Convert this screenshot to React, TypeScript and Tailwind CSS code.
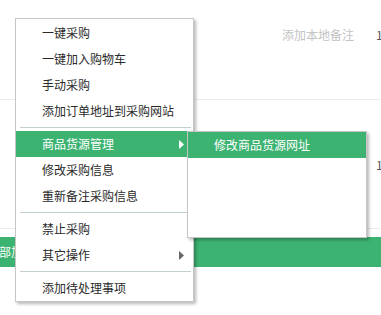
const MAIN_GROUPS = [
  ["一键采购", "一键加入购物车", "手动采购", "添加订单地址到采购网站"],
  ["商品货源管理", "修改采购信息", "重新备注采购信息"],
  ["禁止采购", "其它操作"],
  ["添加待处理事项"],
];

const HAS_SUB = ["商品货源管理", "其它操作"];

function Arrow({ light }: { light?: boolean }) {
  return (
    <svg width="5" height="9" viewBox="0 0 5 9" className="shrink-0">
      <path d="M0 0L5 4.5L0 9Z" fill={light ? "#ffffff" : "#666666"} />
    </svg>
  );
}

function MenuItem({ label, active }: { label: string; active?: boolean }) {
  return (
    <div
      className={`flex h-[26px] items-center pl-[26px] pr-[9px] ${
        active ? "bg-[#3cb371] text-white" : "text-[#2a2a2a]"
      }`}
    >
      <span className="flex-1 whitespace-nowrap leading-[16px]">{label}</span>
      {HAS_SUB.includes(label) && <Arrow light={active} />}
    </div>
  );
}

export default function App() {
  return (
    <div className="relative h-[315px] w-[381px] overflow-hidden bg-white font-['Noto_Sans_CJK_SC','Noto_Sans',sans-serif] text-[12px]">
      {/* Page rows behind the menu */}
      <div className="flex h-[100px] gap-[22px] border-b border-[#ececec] pl-[282px] pt-[27px] leading-[16px]">
        <span className="whitespace-nowrap text-[#c4c4c4]">添加本地备注</span>
        <span className="text-[#555]">1</span>
      </div>
      <div className="flex h-[129px] border-b border-[#ececec] pl-[376px] pt-[57px] leading-[16px]">
        <span className="text-[#555]">1</span>
      </div>
      <div className="mt-[8px] flex h-[30px] items-center bg-[#3cb371] text-white">
        <span className="-ml-[13px] whitespace-nowrap leading-[16px]">全部加入采购单</span>
      </div>

      {/* Context menu */}
      <div className="absolute left-[15px] top-[18px] w-[179px] border border-[#c6c6c6] bg-white pt-[1px] shadow-[2px_2px_3px_rgba(0,0,0,0.28)]">
        {MAIN_GROUPS.map((group, gi) => (
          <div key={gi}>
            {gi > 0 && <div className="mb-[3px] ml-[4px] mr-[2px] mt-[3px] h-px bg-[#c3cfd0]" />}
            {group.map((label) => (
              <MenuItem key={label} label={label} active={label === "商品货源管理"} />
            ))}
          </div>
        ))}
      </div>

      {/* Submenu */}
      <div className="absolute left-[187px] top-[131px] h-[107px] w-[180px] border border-[#c6c6c6] bg-white shadow-[2px_2px_3px_rgba(0,0,0,0.28)]">
        <div className="flex h-[26px] items-center bg-[#3cb371] pl-[26px] text-white">
          <span className="whitespace-nowrap leading-[16px]">修改商品货源网址</span>
        </div>
      </div>
    </div>
  );
}
